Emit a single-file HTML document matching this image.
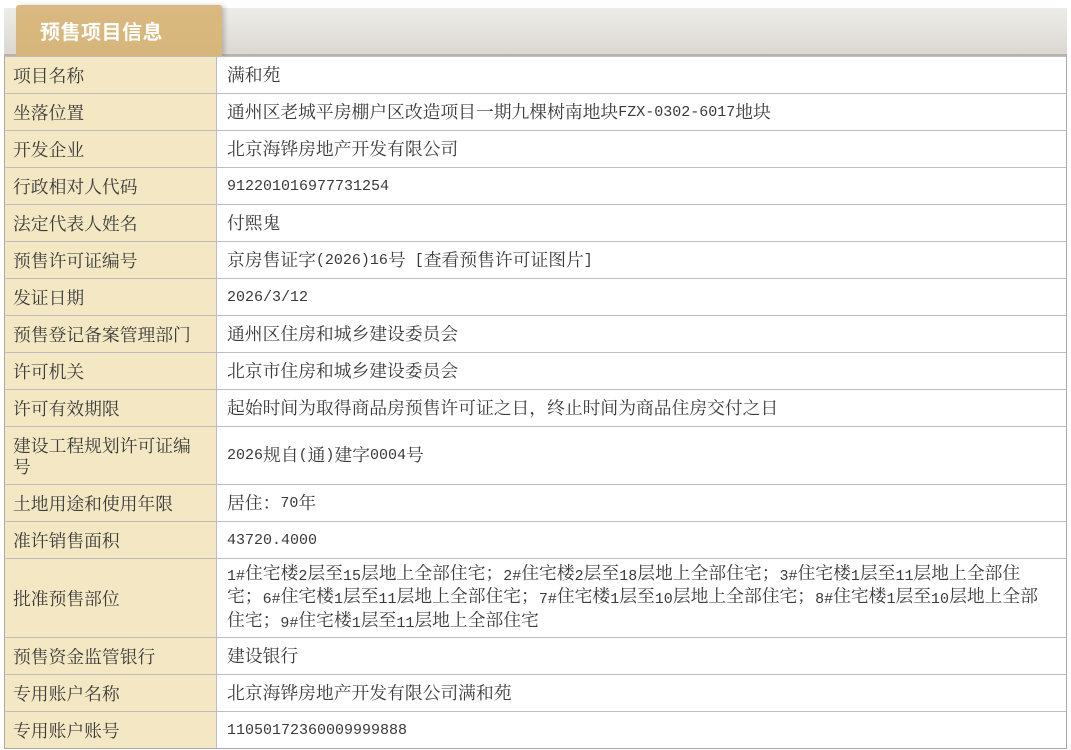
<!DOCTYPE html>
<html><head><meta charset="utf-8"><style>
*{margin:0;padding:0;box-sizing:border-box}
body{width:1071px;height:750px;background:#fff;position:relative;overflow:hidden;font-family:"Noto Serif CJK SC","Liberation Serif",serif;color:#3a3a3a;font-size:17.8px}
.m{font-family:"Liberation Mono",monospace;font-size:15px;position:relative;top:1px}
.bar{position:absolute;left:4px;top:8px;width:1063px;height:48px;background:linear-gradient(#eeece8,#dbd8d2);border-bottom:2px solid #b5b3ae}
.tab{position:absolute;left:16px;top:5px;width:206px;height:51px;background:linear-gradient(#d9b97f,#d6b67b);border-radius:3px 3px 0 0;box-shadow:3px 0 4px rgba(0,0,0,.18);color:#fff;font-family:"Noto Sans CJK SC",sans-serif;font-weight:bold;font-size:20px;line-height:51px;padding-left:24px;letter-spacing:0.5px}
.r{position:absolute;left:4px;width:1063px;border-top:1px solid #bdbdbd;border-left:1px solid #aaa;border-right:1px solid #aaa}
.l{position:absolute;left:0;top:0;bottom:0;width:212px;background:#f3e8c3;border-right:1px solid #bdbdbd;padding-left:8px;display:flex;align-items:center;line-height:21px}
.v{position:absolute;left:212px;top:0;bottom:0;right:0;padding-left:10px;display:flex;align-items:center;white-space:nowrap;line-height:20.5px}
.last{border-bottom:1px solid #aaa}
</style></head><body>
<div class="bar"></div>
<div class="tab">预售项目信息</div>
<div class="r" style="top:56px;height:37px"><div class="l">项目名称</div><div class="v">满和苑</div></div>
<div class="r" style="top:93px;height:37px"><div class="l">坐落位置</div><div class="v">通州区老城平房棚户区改造项目一期九棵树南地块<span class="m">FZX-0302-6017</span>地块</div></div>
<div class="r" style="top:130px;height:37px"><div class="l">开发企业</div><div class="v">北京海铧房地产开发有限公司</div></div>
<div class="r" style="top:167px;height:37px"><div class="l">行政相对人代码</div><div class="v"><span class="m">912201016977731254</span></div></div>
<div class="r" style="top:204px;height:37px"><div class="l">法定代表人姓名</div><div class="v">付熙鬼</div></div>
<div class="r" style="top:241px;height:37px"><div class="l">预售许可证编号</div><div class="v">京房售证字<span class="m">(2026)16</span>号<span class="m">&nbsp;[</span>查看预售许可证图片<span class="m">]</span></div></div>
<div class="r" style="top:278px;height:37px"><div class="l">发证日期</div><div class="v"><span class="m">2026/3/12</span></div></div>
<div class="r" style="top:315px;height:37px"><div class="l">预售登记备案管理部门</div><div class="v">通州区住房和城乡建设委员会</div></div>
<div class="r" style="top:352px;height:37px"><div class="l">许可机关</div><div class="v">北京市住房和城乡建设委员会</div></div>
<div class="r" style="top:389px;height:37px"><div class="l">许可有效期限</div><div class="v">起始时间为取得商品房预售许可证之日，终止时间为商品住房交付之日</div></div>
<div class="r" style="top:426px;height:58px"><div class="l">建设工程规划许可证编<br>号</div><div class="v"><span class="m">2026</span>规自<span class="m">(</span>通<span class="m">)</span>建字<span class="m">0004</span>号</div></div>
<div class="r" style="top:484px;height:37px"><div class="l">土地用途和使用年限</div><div class="v">居住：<span class="m">70</span>年</div></div>
<div class="r" style="top:521px;height:37px"><div class="l">准许销售面积</div><div class="v"><span class="m">43720.4000</span></div></div>
<div class="r" style="top:558px;height:79px"><div class="l">批准预售部位</div><div class="v"><div><span class="m">1#</span>住宅楼<span class="m">2</span>层至<span class="m">15</span>层地上全部住宅；<span class="m">2#</span>住宅楼<span class="m">2</span>层至<span class="m">18</span>层地上全部住宅；<span class="m">3#</span>住宅楼<span class="m">1</span>层至<span class="m">11</span>层地上全部住<br>宅；<span class="m">6#</span>住宅楼<span class="m">1</span>层至<span class="m">11</span>层地上全部住宅；<span class="m">7#</span>住宅楼<span class="m">1</span>层至<span class="m">10</span>层地上全部住宅；<span class="m">8#</span>住宅楼<span class="m">1</span>层至<span class="m">10</span>层地上全部<br>住宅；<span class="m">9#</span>住宅楼<span class="m">1</span>层至<span class="m">11</span>层地上全部住宅</div></div></div>
<div class="r" style="top:637px;height:37px"><div class="l">预售资金监管银行</div><div class="v">建设银行</div></div>
<div class="r" style="top:674px;height:37px"><div class="l">专用账户名称</div><div class="v">北京海铧房地产开发有限公司满和苑</div></div>
<div class="r last" style="top:711px;height:38px"><div class="l">专用账户账号</div><div class="v"><span class="m">11050172360009999888</span></div></div>
</body></html>
